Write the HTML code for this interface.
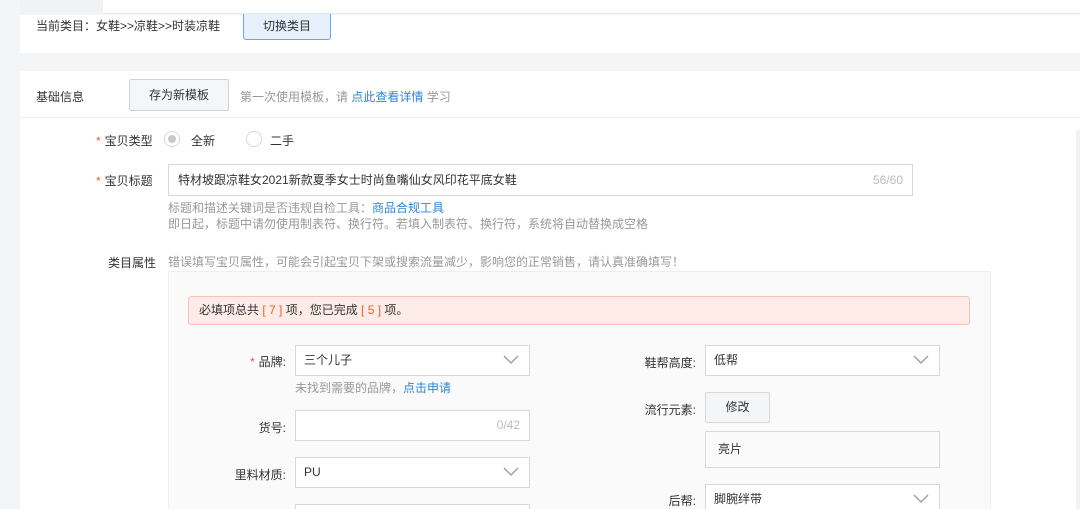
<!DOCTYPE html>
<html><head><meta charset="utf-8"><style>
*{box-sizing:border-box;margin:0;padding:0}
html,body{width:1080px;height:509px;overflow:hidden}
body{background:#f4f5f7;font-family:"Liberation Sans","Noto Sans CJK SC",sans-serif;font-size:12px;color:#333}
#w{position:relative;width:1080px;height:509px;overflow:hidden}
.a{position:absolute}
.sel{position:absolute;background:#fff;border:1px solid #d8d8dc;height:31px;padding-left:8px;line-height:29px;font-size:12px}
.sel svg{position:absolute;right:10px;top:9px}
.lbl{position:absolute;font-size:12px;color:#333;text-align:right}
.star{color:#f05a4a;margin-right:4px}
.blue{color:#2c86d6}
.gray{color:#999}
</style></head><body><div id="w">
<div class="a" style="left:103px;top:0;width:977px;height:14px;background:#fff;border-bottom:1px solid #e8e8e8"></div>
<div class="a" style="left:20px;top:0;width:83px;height:14px;background:#f1f2f4"></div>
<div class="a" style="left:20px;top:15px;width:1060px;height:38px;background:#fff"></div>
<div class="a" style="left:36px;top:17px;font-size:12px;color:#333">当前类目：女鞋&gt;&gt;凉鞋&gt;&gt;时装凉鞋</div>
<div class="a" style="left:243px;top:14px;width:88px;height:26px;background:#e6f1fd;border:1px solid #66a9e8;border-top:none;border-radius:0 0 3px 3px;text-align:center;line-height:24px;color:#333">切换类目</div>
<div class="a" style="left:20px;top:71px;width:1060px;height:438px;background:#fff"></div>
<div class="a" style="left:20px;top:117px;width:1060px;height:1px;background:#eceef0"></div>
<div class="a" style="left:1076px;top:130px;width:4px;height:379px;background:#f3f3f3"></div>
<div class="a" style="left:36px;top:88px">基础信息</div>
<div class="a" style="left:129px;top:79px;width:100px;height:32px;background:#f5f6f8;border:1px solid #cfd2d6;border-radius:2px;text-align:center;line-height:30px">存为新模板</div>
<div class="a gray" style="left:240px;top:88px">第一次使用模板，请 <span class="blue">点此查看详情</span> 学习</div>
<div class="lbl" style="left:96px;top:132px"><span class="star">*</span>宝贝类型</div>
<div class="a" style="left:164px;top:131px;width:16px;height:16px;border-radius:50%;border:1px solid #d8d8d8;background:#fff"><div style="margin:3px;width:8px;height:8px;border-radius:50%;background:#c8c8c8"></div></div>
<div class="a" style="left:191px;top:132px">全新</div>
<div class="a" style="left:246px;top:131px;width:16px;height:16px;border-radius:50%;border:1px solid #d8d8d8"></div>
<div class="a" style="left:270px;top:132px">二手</div>
<div class="lbl" style="left:96px;top:172px"><span class="star">*</span>宝贝标题</div>
<div class="a" style="left:168px;top:164px;width:745px;height:32px;border:1px solid #d8d8dc;padding-left:9px;line-height:30px">特材坡跟凉鞋女2021新款夏季女士时尚鱼嘴仙女风印花平底女鞋<span class="a" style="right:9px;top:0;color:#bbb">56/60</span></div>
<div class="a gray" style="left:168px;top:199px">标题和描述关键词是否违规自检工具：<span class="blue">商品合规工具</span></div>
<div class="a gray" style="left:168px;top:215px">即日起，标题中请勿使用制表符、换行符。若填入制表符、换行符，系统将自动替换成空格</div>
<div class="lbl" style="left:108px;top:254px">类目属性</div>
<div class="a gray" style="left:168px;top:253px">错误填写宝贝属性，可能会引起宝贝下架或搜索流量减少，影响您的正常销售，请认真准确填写！</div>
<div class="a" style="left:168px;top:271px;width:823px;height:240px;background:#fafafa;border:1px solid #eeeeee"></div>
<div class="a" style="left:188px;top:296px;width:782px;height:29px;background:#fdebe7;border:1px solid #f7c3b7;border-radius:3px;padding-left:10px;line-height:27px">必填项总共<span style="color:#f0602a"> [ 7 ] </span>项，您已完成<span style="color:#f0602a"> [ 5 ] </span>项。</div>
<div class="lbl" style="left:230px;top:353px;width:56px"><span class="star">*</span>品牌:</div>
<div class="sel" style="left:295px;top:345px;width:235px">三个儿子<svg width="16" height="10"><path d="M1 1l7 7 7-7" fill="none" stroke="#999" stroke-width="1.3"/></svg></div>
<div class="a gray" style="left:295px;top:379px">未找到需要的品牌，<span class="blue">点击申请</span></div>
<div class="lbl" style="left:230px;top:419px;width:56px">货号:</div>
<div class="sel" style="left:295px;top:410px;width:235px"><span class="a" style="right:9px;top:0;color:#bbb">0/42</span></div>
<div class="lbl" style="left:200px;top:466px;width:86px">里料材质:</div>
<div class="sel" style="left:295px;top:457px;width:235px">PU<svg width="16" height="10"><path d="M1 1l7 7 7-7" fill="none" stroke="#999" stroke-width="1.3"/></svg></div>
<div class="sel" style="left:295px;top:504px;width:235px;height:5px;border-bottom:none"></div>
<div class="lbl" style="left:620px;top:354px;width:76px">鞋帮高度:</div>
<div class="sel" style="left:705px;top:345px;width:235px">低帮<svg width="16" height="10"><path d="M1 1l7 7 7-7" fill="none" stroke="#999" stroke-width="1.3"/></svg></div>
<div class="lbl" style="left:620px;top:401px;width:76px">流行元素:</div>
<div class="a" style="left:705px;top:392px;width:65px;height:31px;background:#f4f5f7;border:1px solid #d8d8dc;border-radius:2px;text-align:center;line-height:29px">修改</div>
<div class="a" style="left:705px;top:431px;width:235px;height:37px;border:1px solid #d8d8dc;padding-left:12px;line-height:35px;background:#fafafa">亮片</div>
<div class="lbl" style="left:620px;top:492px;width:76px">后帮:</div>
<div class="sel" style="left:705px;top:484px;width:235px;height:25px;border-bottom:none">脚腕绊带<svg width="16" height="10"><path d="M1 1l7 7 7-7" fill="none" stroke="#999" stroke-width="1.3"/></svg></div>
</div></body></html>
